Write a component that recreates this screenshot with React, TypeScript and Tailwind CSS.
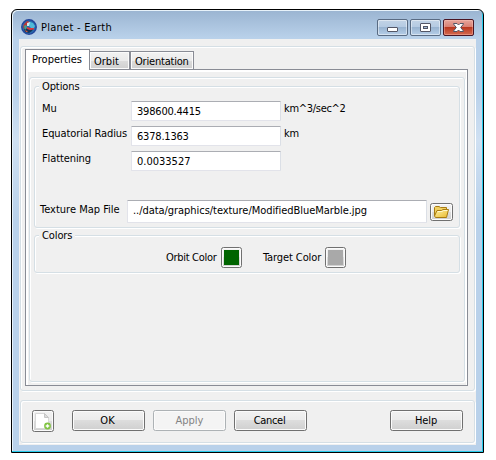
import type { ReactNode } from "react";

function Group({ className, children }: { className: string; children?: ReactNode }) {
  return (
    <div className={`relative rounded-[3px] border border-[#d5dfe5] shadow-[1px_1px_0_#fff,inset_1px_1px_0_#fff] ${className}`}>
      {children}
    </div>
  );
}

function Legend({ children }: { children: ReactNode }) {
  return <span className="absolute -top-[7px] left-[4px] bg-[#f0f0f0] px-[3px] tracking-[-0.1px]">{children}</span>;
}

function Field({ value, className }: { value: string; className: string }) {
  return (
    <div className={`flex items-center rounded-[1px] border border-[#e2e3ea] border-t-[#abadb3] border-r-[#dbdfe6] bg-white ${className}`}>
      {value}
    </div>
  );
}

const face =
  "border border-[#707070] rounded-[2.5px] bg-[linear-gradient(#f2f2f2_0,#ebebeb_50%,#dddddd_50%,#cfcfcf_100%)] shadow-[inset_0_0_0_1px_#fbfbfb] flex items-center justify-center";

function Button({ children, className }: { children: ReactNode; className: string }) {
  return <button className={`h-[21px] w-[73px] pb-px ${face} ${className}`}>{children}</button>;
}

function Swatch({ color }: { color: string }) {
  return (
    <button className={`size-[21px] ${face}`}>
      <span className={`size-[15px] ${color}`} />
    </button>
  );
}

function GlobeIcon() {
  return (
    <svg width="16" height="16" viewBox="0 0 16 16">
      <circle cx="8" cy="8" r="7.2" fill="#286eaf" stroke="#24479b" strokeWidth="1.5" />
      <path d="M3 5 6 2l3 1-2 3-3 1-1 3-1-2z" fill="#b93637" />
      <path d="M6 4 9 3l1 2-2 2-2 0z" fill="#cfeaf0" />
      <path d="M9 3 12 4l2 3-1 2-3 0-2-2z" fill="#4fb9d8" />
      <path d="m3 10 3-1 3 1 4-1-2 3-3 2-4-1z" fill="#163456" />
      <path d="m6 8 3 1 4 0v1.500l-4 .5-3-1z" fill="#de363d" />
      <path d="m3 7 2-1 1 3-2 2z" fill="#4c9f80" />
      <path d="m4 11 2 1 1 1-2 0z" fill="#d8553a" />
    </svg>
  );
}

function FolderIcon() {
  return (
    <svg width="17" height="14" viewBox="0 0 17 14">
      <defs>
        <linearGradient id="folder" x1="0" y1="0" x2="1" y2="1">
          <stop offset="0" stopColor="#fff3a8" />
          <stop offset="1" stopColor="#e9b92c" />
        </linearGradient>
      </defs>
      <path d="M1.500 11V2.500L2.500 1.500H6L7.500 2.500H13.500V5" fill="#f0d060" stroke="#a87b12" />
      <path d="M2.500 12.500 1.500 11 4 5.500H8.500L10 4.500H15.500L13.500 12.500Z" fill="url(#folder)" stroke="#a87b12" />
      <path d="M4.700 6.500H9L10.500 5.500H14.500" fill="none" stroke="#fff8cd" />
    </svg>
  );
}

function NewPageIcon() {
  return (
    <svg width="18" height="18" viewBox="0 0 18 18">
      <path d="M1.500 1.500h9l4 4v11h-13z" fill="#fff" stroke="#d8d8d8" />
      <path d="M10.500 1.500v4h4z" fill="#ddd" stroke="#c6c6c6" />
      <circle cx="13.500" cy="14" r="3.400" fill="#80c342" />
      <path d="M13.500 12.200v3.600m-1.800-1.800h3.600" stroke="#fff" strokeWidth="1.400" />
    </svg>
  );
}

const caption = "flex h-[17px] w-[31px] items-center justify-center rounded-[2px] border";
const blueCaption =
  "border-[#596b83] bg-[linear-gradient(#c2d3e6_0,#b4cae2_48%,#98b3d0_49%,#b6cee8_100%)] shadow-[inset_0_0_0_1px_rgba(255,255,255,.45)]";
const tab =
  "mb-[1px] h-[18px] border border-b-0 border-[#898c95] bg-[linear-gradient(#f2f2f2_0,#ebebeb_50%,#dddddd_50%,#cfcfcf_100%)] pt-[3px] whitespace-nowrap shadow-[inset_0_0_0_1px_#fbfbfb]";

export default function App() {
  return (
    <div className="h-[460px] w-[496px] overflow-hidden bg-white pt-[9px] pl-[11px] font-['DejaVu_Sans_Condensed','DejaVu_Sans',sans-serif] text-[11px] leading-[13px] text-black [font-stretch:condensed]">
      <div className="h-[444px] w-[473px] rounded-t-[6px] border border-black bg-[linear-gradient(#9ab4d1_0,#b9d1ea_28px,#b9d1ea_80px,#cfe0f2_130px,#b9d1ea_210px)] pr-[7px] pl-[7px] shadow-[inset_-1px_-1px_0_#26cbeb,inset_1px_1px_0_#e7f2fa]">
        <header className="flex h-[29px] items-start pt-[9px] pl-[2px]">
          <GlobeIcon />
          <span className="mt-[2px] ml-[4px] w-[74px] whitespace-nowrap tracking-[0.25px]">Planet - Earth</span>
          <div className="-mr-px ml-auto flex gap-[2px] pr-[3px]">
            <div className={`${caption} ${blueCaption}`}>
              <span className="mt-[4px] h-[5px] w-[11px] rounded-[1px] border border-[#535666] bg-white" />
            </div>
            <div className={`${caption} ${blueCaption}`}>
              <span className="flex h-[9px] w-[11px] items-center justify-center rounded-[1px] border border-[#535666] bg-white">
                <span className="h-[3px] w-[5px] border border-[#535666] bg-[#a3bbd6]" />
              </span>
            </div>
            <div className={`${caption} border-[#491523] bg-[linear-gradient(#e6a59b_0,#d98073_46%,#b9351d_47%,#d46a50_100%)] shadow-[inset_0_0_0_1px_rgba(255,200,190,.4)]`}>
              <svg width="13" height="11" viewBox="0 0 13 11">
                <path d="M1.500 1.500H5L6.500 3 8 1.500H11.500V2L8.700 5.500 11.500 9V9.500H8L6.500 8 5 9.500H1.500V9L4.300 5.500 1.500 2Z" fill="#fff" stroke="#535666" />
              </svg>
            </div>
          </div>
        </header>

        <main className="h-[406px] w-[457px] bg-[#f0f0f0] px-[1px] pt-[7px]">
          <Group className="h-[345px] w-[455px] pt-[2px] pl-[4px]">
            <div className="relative z-10 flex h-[21px] items-end">
              <div className="h-[21px] w-[65px] border border-b-0 border-[#898c95] bg-white pt-[3px] pl-[6px] whitespace-nowrap">Properties</div>
              <div className={`${tab} w-[40px] border-l-0 pl-[4px]`}>Orbit</div>
              <div className={`${tab} w-[64px] pl-[4px] tracking-[-0.2px]`}>Orientation</div>
            </div>
            <div className="-mt-px h-[317px] w-[443px] border border-[#898c95] bg-white p-[2px]">
              <div className="h-[313px] w-[438px] bg-[#f0f0f0] pt-[5px] pl-px">
                <Group className="h-[305px] w-[436px] pt-[8px] pl-[4px]">
                  <Group className="h-[142px] w-[426px]">
                    <Legend>Options</Legend>
                    <div className="grid grid-cols-[89px_150px_1fr] gap-y-[5px] pt-[14px] pl-[7px] whitespace-nowrap">
                      <span className="pt-px">Mu</span>
                      <Field value="398600.4415" className="h-[20px] pl-[5px] tracking-[-0.2px]" />
                      <span className="pt-px pl-[3px] tracking-[-0.3px]">km^3/sec^2</span>
                      <span className="pt-px tracking-[-0.1px]">Equatorial Radius</span>
                      <Field value="6378.1363" className="h-[20px] pl-[5px] tracking-[-0.2px]" />
                      <span className="pt-px pl-[3px] tracking-[-0.3px]">km</span>
                      <span className="pt-px tracking-[-0.1px]">Flattening</span>
                      <Field value="0.0033527" className="h-[20px] pl-[5px]" />
                    </div>
                    <div className="mt-[29px] flex items-start pl-[5px] whitespace-nowrap">
                      <span className="mt-[3px] w-[87px]">Texture Map File</span>
                      <Field value="../data/graphics/texture/ModifiedBlueMarble.jpg" className="h-[23px] w-[300px] pb-[2px] pl-[5px] tracking-[-0.05px]" />
                      <button className={`mt-[3px] ml-[3px] h-[18px] w-[23px] ${face}`}>
                        <FolderIcon />
                      </button>
                    </div>
                  </Group>
                  <Group className="mt-[7px] h-[38px] w-[426px] pt-[11px]">
                    <Legend>Colors</Legend>
                    <div className="flex items-center pl-[131px] whitespace-nowrap">
                      <span className="w-[55px] tracking-[-0.3px]">Orbit Color</span>
                      <Swatch color="bg-[#006400]" />
                      <span className="ml-[21px] w-[62px] tracking-[-0.1px]">Target Color</span>
                      <Swatch color="bg-[#a9a9a9]" />
                    </div>
                  </Group>
                </Group>
              </div>
            </div>
          </Group>

          <Group className="mt-[9px] flex h-[43px] w-[455px] pt-[9px] pl-[11px]">
            <button className={`size-[22px] ${face}`}>
              <NewPageIcon />
            </button>
            <Button className="ml-[18px] pr-[2px]">OK</Button>
            <button className="ml-[8px] flex h-[21px] w-[73px] items-center justify-center rounded-[2.5px] border border-[#adb2b5] bg-[#f4f4f4] pb-px text-[#838383] shadow-[inset_0_0_0_1px_#fbfbfb]">
              Apply
            </button>
            <Button className="ml-[8px] pr-[2px] tracking-[-0.3px]">Cancel</Button>
            <Button className="mr-[11px] ml-auto pr-px tracking-[-0.1px]">Help</Button>
          </Group>
        </main>
      </div>
    </div>
  );
}
